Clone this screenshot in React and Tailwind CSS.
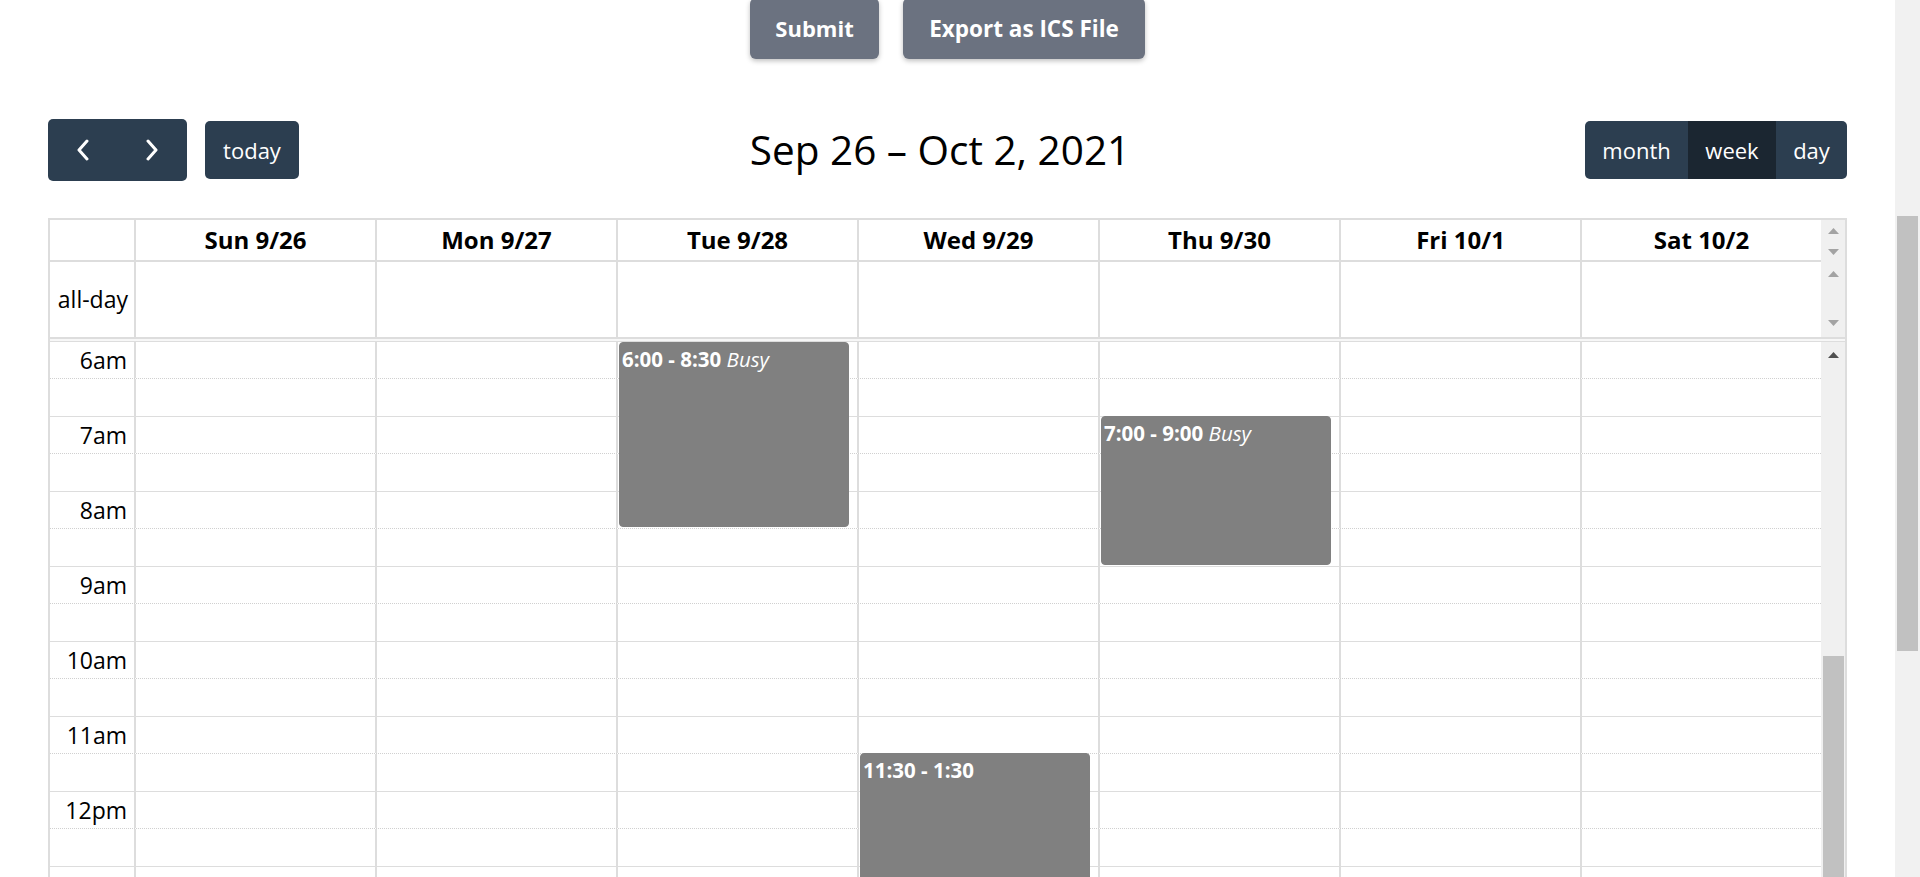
import React from "react";

const days = ["Sun 9/26", "Mon 9/27", "Tue 9/28", "Wed 9/29", "Thu 9/30", "Fri 10/1", "Sat 10/2"];
const hours = ["6am", "7am", "8am", "9am", "10am", "11am", "12pm", ""];

const events = {
  2: [{ cls: "top-[0px] h-[185px]", time: "6:00 - 8:30", title: "Busy" }],
  3: [{ cls: "top-[411px] h-[160px]", time: "11:30 - 1:30", title: "" }],
  4: [{ cls: "top-[74px] h-[149px]", time: "7:00 - 9:00", title: "Busy" }],
};

function Tri({ down = false, dark = false }) {
  return (
    <svg width="11" height="6" viewBox="0 0 11 6" className="block">
      <polygon
        points={down ? "0,0 11,0 5.5,6" : "0,6 11,6 5.5,0"}
        fill={dark ? "#505050" : "#a3a3a3"}
      />
    </svg>
  );
}

function Chevron({ right = false }) {
  return (
    <svg width="14" height="22" viewBox="0 0 14 22" className="block">
      <polyline
        points={right ? "3,2 11,11 3,20" : "11,2 3,11 11,20"}
        fill="none"
        stroke="#ffffff"
        strokeWidth="3"
        strokeLinecap="round"
        strokeLinejoin="round"
      />
    </svg>
  );
}

export default function App() {
  return (
    <div className="w-[1920px] h-[877px] overflow-hidden flex bg-white font-['Open_Sans',sans-serif] text-black">
      <div className="w-[1895px] px-[48px] flex flex-col">
        {/* top buttons */}
        <div className="flex justify-center gap-[24px] mt-[-2px] shrink-0">
          <button className="w-[129px] h-[61px] rounded-md bg-[#6b7280] text-white font-bold text-[22px] shadow-[0_2px_5px_rgba(0,0,0,0.25)]">
            Submit
          </button>
          <button className="w-[242px] h-[61px] rounded-md bg-[#6b7280] text-white font-bold text-[22.5px] shadow-[0_2px_5px_rgba(0,0,0,0.25)]">
            Export as ICS File
          </button>
        </div>

        {/* toolbar */}
        <div className="mt-[60px] h-[62px] flex items-center justify-between shrink-0">
          <div className="flex items-center gap-[18px]">
            <div className="flex w-[139px] h-[62px] rounded-[5px] bg-[#2c3e50] overflow-hidden">
              <div className="flex-1 flex items-center justify-center">
                <Chevron />
              </div>
              <div className="flex-1 flex items-center justify-center">
                <Chevron right />
              </div>
            </div>
            <div className="w-[94px] h-[58px] rounded-[5px] bg-[#2c3e50] text-white text-[22px] flex items-center justify-center">
              today
            </div>
          </div>
          <div className="text-[40.5px] leading-[1.2] text-black mr-[4px]">Sep 26 – Oct 2, 2021</div>
          <div className="flex h-[58px] rounded-[5px] overflow-hidden text-white text-[22px]">
            <div className="w-[103px] bg-[#2c3e50] flex items-center justify-center">month</div>
            <div className="w-[88px] bg-[#1b2631] flex items-center justify-center">week</div>
            <div className="w-[71px] bg-[#2c3e50] flex items-center justify-center">day</div>
          </div>
        </div>

        {/* calendar */}
        <div className="mt-[37px] flex-1 min-h-0 flex flex-col border-t-2 border-x-2 border-[#ddd] overflow-hidden">
          {/* header + all-day */}
          <div className="flex shrink-0">
            <div className="flex-1 flex flex-col">
              <div className="h-[42px] flex border-b-2 border-[#ddd]">
                <div className="w-[84px] shrink-0" />
                {days.map((d) => (
                  <div
                    key={d}
                    className="flex-1 border-l-2 border-[#ddd] flex items-center justify-center font-bold text-[24px]"
                  >
                    {d}
                  </div>
                ))}
              </div>
              <div className="h-[75px] flex">
                <div className="w-[84px] shrink-0 flex items-center justify-end pr-[6px] text-[23px]">all-day</div>
                {days.map((d) => (
                  <div key={d} className="flex-1 border-l-2 border-[#ddd]" />
                ))}
              </div>
            </div>
            <div className="w-[24px] bg-[#f0f0f0] flex flex-col items-center">
              <div className="h-[42px] flex flex-col items-center justify-between pt-[8px] pb-[7px]">
                <Tri />
                <Tri down />
              </div>
              <div className="h-[75px] flex flex-col items-center justify-between pt-[9px] pb-[11px]">
                <Tri />
                <Tri down />
              </div>
            </div>
          </div>

          {/* divider */}
          <div className="h-[5px] shrink-0 border-t-2 border-b border-[#ddd] bg-[#f7f7f7]" />

          {/* time grid */}
          <div className="flex flex-1 min-h-0">
            <div className="flex-1 relative">
              {hours.map((h, idx) => (
                <div key={idx}>
                  <div className="h-[37px] flex border-b border-dotted border-[#d0d0d0]">
                    <div className="w-[84px] shrink-0 flex items-center justify-end pr-[7px] text-[23px]">{h}</div>
                    {days.map((d) => (
                      <div key={d} className="flex-1 border-l-2 border-[#ddd]" />
                    ))}
                  </div>
                  <div className="h-[38px] flex border-b border-[#ddd]">
                    <div className="w-[84px] shrink-0" />
                    {days.map((d) => (
                      <div key={d} className="flex-1 border-l-2 border-[#ddd]" />
                    ))}
                  </div>
                </div>
              ))}

              {/* events overlay */}
              <div className="absolute top-0 bottom-0 left-[84px] right-0 flex">
                {days.map((d, i) => (
                  <div key={d} className="flex-1 relative border-l-2 border-transparent">
                    {(events[i] || []).map((ev) => (
                      <div
                        key={ev.time}
                        className={
                          "absolute left-[1px] right-[8px] rounded-[4px] bg-[#808080] border border-[#808080] px-[2px] pt-[4px] text-white text-[20.5px] leading-[1.25] overflow-hidden " +
                          ev.cls
                        }
                      >
                        <span className="font-bold">{ev.time}</span>
                        {ev.title ? <span className="italic"> {ev.title}</span> : null}
                      </div>
                    ))}
                  </div>
                ))}
              </div>
            </div>
            <div className="w-[24px] bg-[#f0f0f0] flex flex-col">
              <div className="h-[26px] flex items-center justify-center shrink-0">
                <Tri dark />
              </div>
              <div className="h-[288px] shrink-0" />
              <div className="flex-1 ml-[2px] w-[21px] bg-[#c1c1c1]" />
            </div>
          </div>
        </div>
      </div>

      {/* page scrollbar */}
      <div className="w-[25px] bg-[#f1f1f1] flex flex-col pl-[2px]">
        <div className="h-[216px] shrink-0" />
        <div className="h-[435px] w-[21px] bg-[#c1c1c1]" />
      </div>
    </div>
  );
}
